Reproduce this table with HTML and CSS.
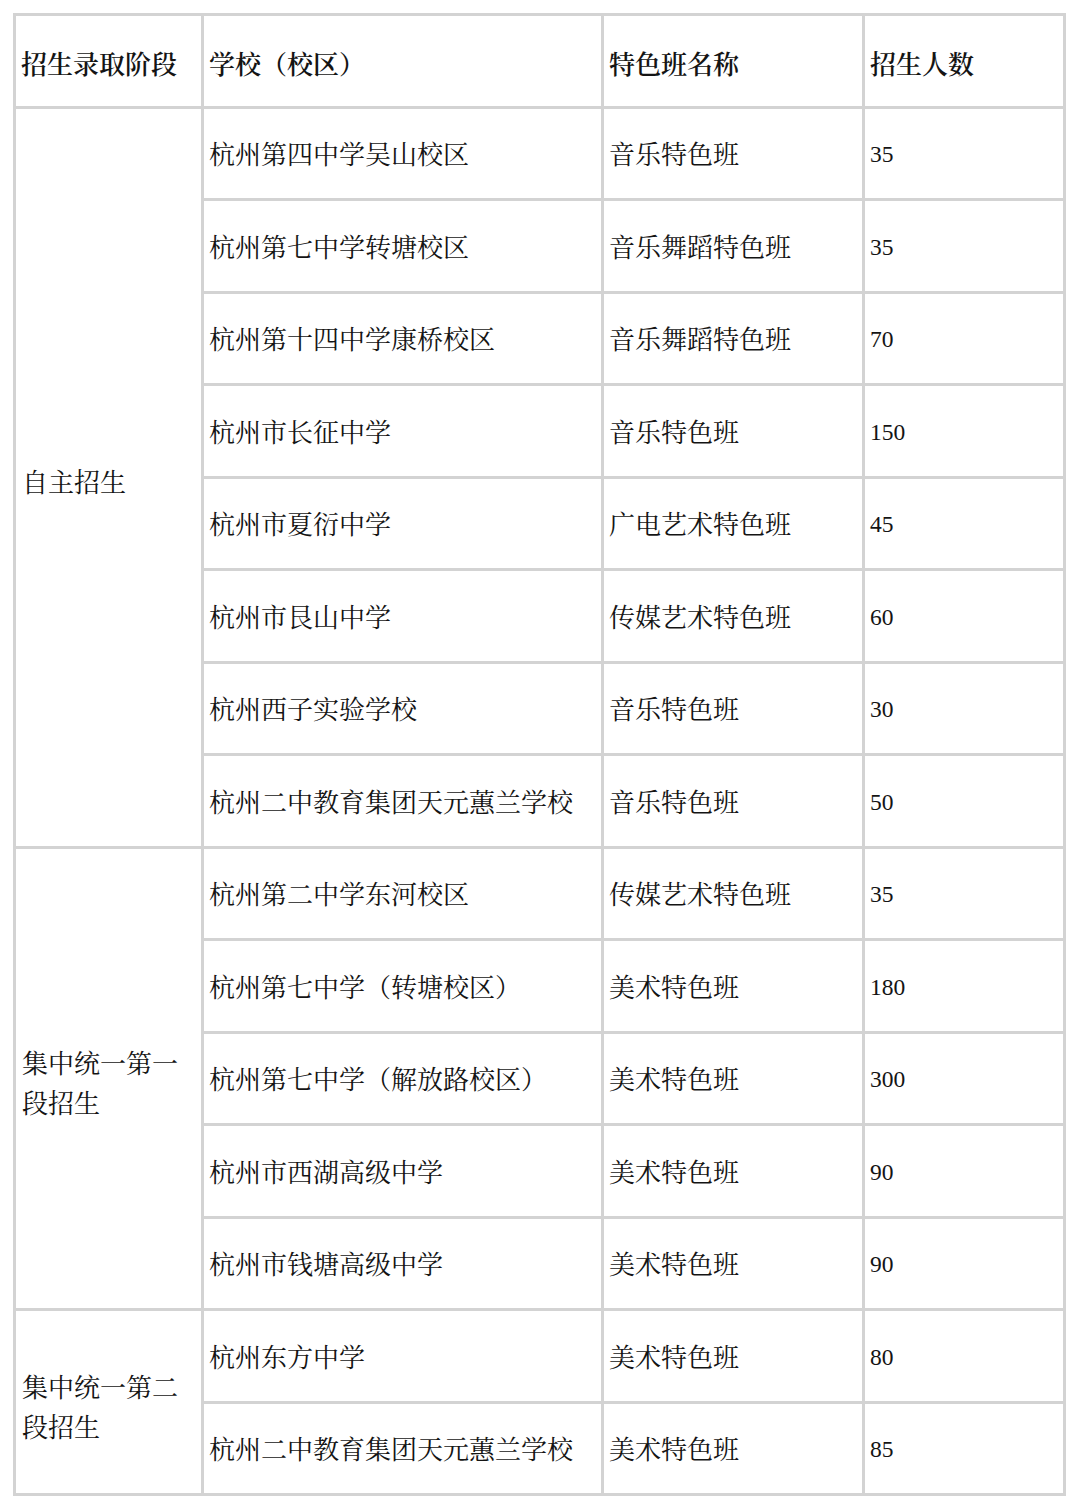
FILE: index.html
```html
<!DOCTYPE html>
<html lang="zh-CN">
<head>
<meta charset="utf-8">
<link rel="stylesheet" href="styles.css">
</head>
<body>
<table class="tbl">
  <colgroup>
    <col class="c1"><col class="c2"><col class="c3"><col class="c4">
  </colgroup>
  <thead>
    <tr class="hd">
      <th>招生录取阶段</th><th>学校（校区）</th><th>特色班名称</th><th>招生人数</th>
    </tr>
  </thead>
  <tbody>
    <tr><td rowspan="8" class="stage">自主招生</td><td>杭州第四中学吴山校区</td><td>音乐特色班</td><td class="num">35</td></tr>
    <tr><td>杭州第七中学转塘校区</td><td>音乐舞蹈特色班</td><td class="num">35</td></tr>
    <tr><td>杭州第十四中学康桥校区</td><td>音乐舞蹈特色班</td><td class="num">70</td></tr>
    <tr><td>杭州市长征中学</td><td>音乐特色班</td><td class="num">150</td></tr>
    <tr><td>杭州市夏衍中学</td><td>广电艺术特色班</td><td class="num">45</td></tr>
    <tr><td>杭州市艮山中学</td><td>传媒艺术特色班</td><td class="num">60</td></tr>
    <tr><td>杭州西子实验学校</td><td>音乐特色班</td><td class="num">30</td></tr>
    <tr><td>杭州二中教育集团天元蕙兰学校</td><td>音乐特色班</td><td class="num">50</td></tr>
    <tr><td rowspan="5" class="stage">集中统一第一段招生</td><td>杭州第二中学东河校区</td><td>传媒艺术特色班</td><td class="num">35</td></tr>
    <tr><td>杭州第七中学（转塘校区）</td><td>美术特色班</td><td class="num">180</td></tr>
    <tr><td>杭州第七中学（解放路校区）</td><td>美术特色班</td><td class="num">300</td></tr>
    <tr><td>杭州市西湖高级中学</td><td>美术特色班</td><td class="num">90</td></tr>
    <tr><td>杭州市钱塘高级中学</td><td>美术特色班</td><td class="num">90</td></tr>
    <tr><td rowspan="2" class="stage">集中统一第二段招生</td><td>杭州东方中学</td><td>美术特色班</td><td class="num">80</td></tr>
    <tr><td>杭州二中教育集团天元蕙兰学校</td><td>美术特色班</td><td class="num">85</td></tr>
  </tbody>
</table>
</body>
</html>
```
FILE: styles.css
```css
html, body {
  margin: 0;
  padding: 0;
  background: #ffffff;
}
body {
  padding: 13px 0 0 13px;
  font-family: "Liberation Serif", "Noto Serif CJK SC", "Noto Sans CJK SC", serif;
  color: #141414;
}
.tbl {
  border-collapse: collapse;
  table-layout: fixed;
  width: 1050px;
}
.c1 { width: 188px; }
.c2 { width: 400px; }
.c3 { width: 261px; }
.c4 { width: 201px; }
.tbl th,
.tbl td {
  border: 3px solid #d3d3d3;
  height: 89.5px;
  padding: 0 5px;
  text-align: left;
  vertical-align: middle;
  font-size: 26px;
  line-height: 40px;
  font-family: "Noto Serif CJK SC", "Noto Sans CJK SC", serif;
  font-weight: 400;
}
.tbl th {
  font-weight: 600;
  padding-top: 5px;
  height: 84.5px;
}
.tbl td.num {
  font-family: "Liberation Serif", serif;
  font-size: 23.5px;
  padding-left: 5px;
  padding-top: 2px;
  height: 87.5px;
}
.tbl td.stage {
  padding-top: 8px;
  padding-left: 6px;
}
```
